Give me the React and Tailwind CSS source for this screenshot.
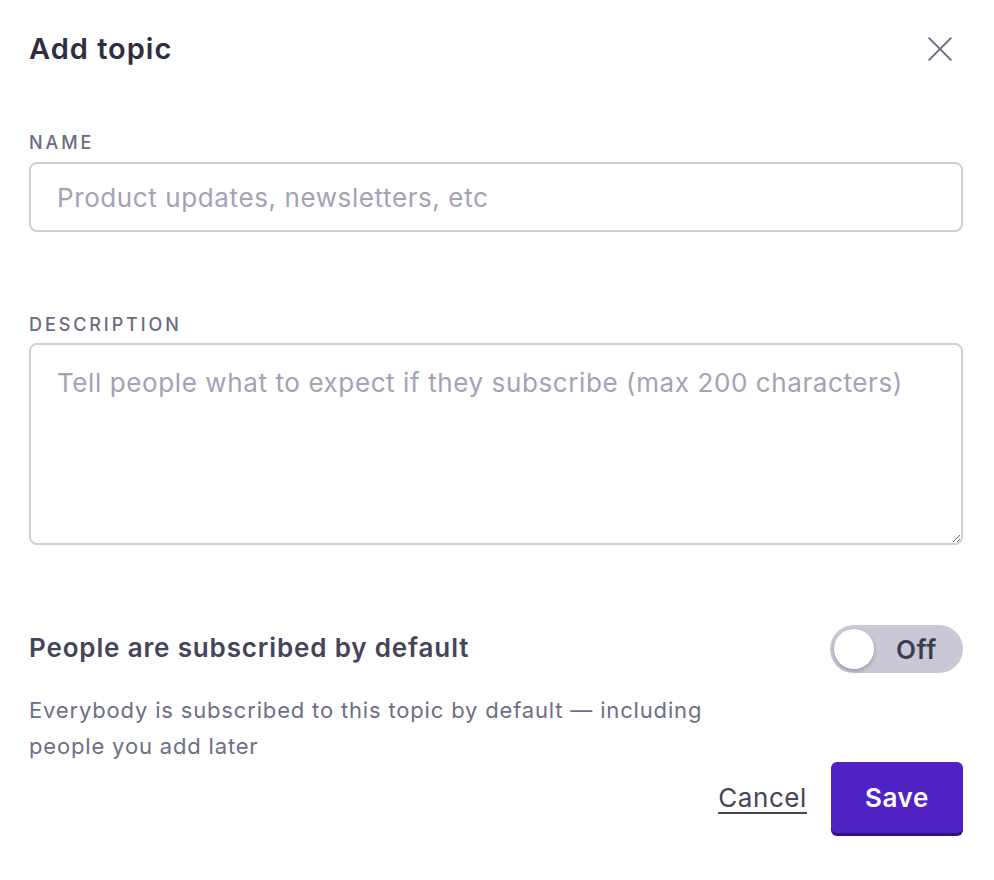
import { useState } from 'react';

export default function App() {
  const [subscribed, setSubscribed] = useState(false);

  return (
    <div className="min-h-[880px] bg-white pl-[29px] pr-[31px] pt-[31px] text-[#2e2e40]" style={{ fontFamily: 'Inter, "Noto Sans", sans-serif' }}>
      {/* Header */}
      <div className="flex h-[36px] items-center justify-between">
        <h1 className="text-[29px] font-semibold leading-[36px] tracking-[1px] text-[#2e2e40]">Add topic</h1>
        <button className="mr-[10px] text-[#6b6b80]" aria-label="Close">
          <svg width="26" height="26" viewBox="0 0 24 24" fill="none" stroke="currentColor" strokeWidth="1.8" strokeLinecap="round">
            <path d="M2 2 L22 22 M22 2 L2 22" />
          </svg>
        </button>
      </div>

      {/* Name */}
      <label className="mt-[62px] block text-[18px] font-medium uppercase leading-[27px] tracking-[2.9px] text-[#6b6b80]">Name</label>
      <input
        className="mt-[6px] block h-[70px] w-full rounded-[8px] border-2 border-[#cfcfdb] px-[26px] text-[26px] tracking-[0.6px] text-[#2e2e40] placeholder:text-[#a3a3b5] outline-none"
        placeholder="Product updates, newsletters, etc"
      />

      {/* Description */}
      <label className="mt-[79px] block text-[18px] font-medium uppercase leading-[27px] tracking-[2.9px] text-[#6b6b80]">Description</label>
      <textarea
        className="mt-[5px] block h-[202px] w-full resize-y rounded-[8px] border-2 border-[#cfcfdb] px-[26px] py-[20px] text-[26px] leading-[36px] tracking-[0.6px] text-[#2e2e40] placeholder:text-[#a3a3b5] outline-none"
        placeholder="Tell people what to expect if they subscribe (max 200 characters)"
      />

      {/* Subscribed by default */}
      <div className="mt-[77px] flex items-center justify-between">
        <span className="text-[26px] font-semibold leading-[36px] tracking-[0.85px] text-[#44445a]">People are subscribed by default</span>
        <button
          onClick={() => setSubscribed(!subscribed)}
          className="mt-[3px] flex h-[48px] w-[133px] items-center rounded-full bg-[#c9c9d6] px-[4px]"
        >
          <span className="h-[40px] w-[40px] rounded-full bg-white shadow-[0_2px_4px_rgba(0,0,0,0.25)]" />
          <span className="flex-1 text-center text-[26px] font-semibold tracking-[0.6px] text-[#3c3c50]">{subscribed ? 'On' : 'Off'}</span>
        </button>
      </div>
      <p className="mt-[19px] w-[700px] text-[22px] leading-[36px] tracking-[0.83px] text-[#6e6e85]">
        Everybody is subscribed to this topic by default — including people you add later
      </p>

      {/* Actions */}
      <div className="-mt-[2px] flex items-center justify-end gap-[24px]">
        <button className="text-[26px] tracking-[0.6px] text-[#44445a] underline underline-offset-[5px] decoration-[2px]">Cancel</button>
        <button className="h-[71px] w-[132px] rounded-[6px] bg-[#5022c4] text-[26px] font-semibold tracking-[0.6px] text-white shadow-[0_3px_0_#2e1580]">Save</button>
      </div>
    </div>
  );
}
